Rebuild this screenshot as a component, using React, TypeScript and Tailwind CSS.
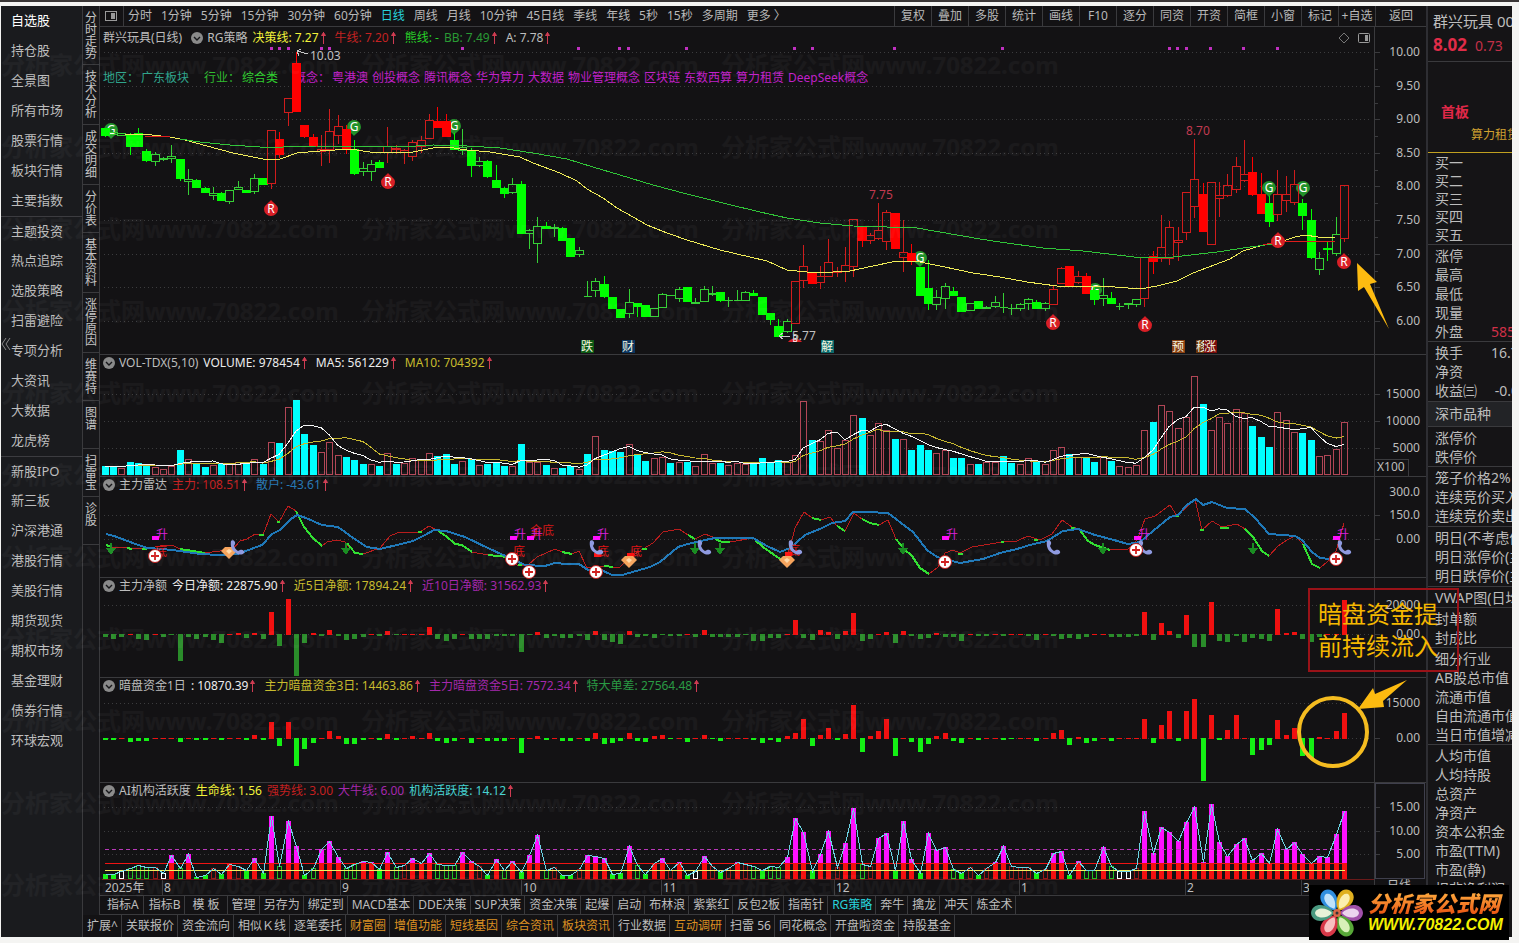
import type { ReactNode } from 'react';
import { clsx } from 'clsx';

const STEP = 8.317;
const cx = (i: number) => Math.floor(105.2 + STEP * i);

const SIDE_MENU = [
  ['自选股', '持仓股', '全景图', '所有市场', '股票行情', '板块行情', '主要指数'],
  ['主题投资', '热点追踪', '选股策略', '扫雷避险', '专项分析', '大资讯', '大数据', '龙虎榜'],
  ['新股IPO', '新三板', '沪深港通', '港股行情', '美股行情', '期货现货', '期权市场', '基金理财', '债券行情', '环球宏观'],
];

const SIDE_TABS = ['分时走势', '技术分析', '成交明细', '分价表', '基本资料', '涨停原因', '维赛特', '图谱', '扫雷宝', '诊股'];

const PERIODS = ['分时', '1分钟', '5分钟', '15分钟', '30分钟', '60分钟', '日线', '周线', '月线', '10分钟', '45日线', '季线', '年线', '5秒', '15秒', '多周期', '更多 〉'];
const TOOLS = ['复权', '叠加', '多股', '统计', '画线', 'F10', '逐分', '同资', '开资', '简框', '小窗', '标记', '+自选'];

const TEMPLATES = ['指标A', '指标B', '模 板', '管理', '另存为', '绑定到', 'MACD基本', 'DDE决策', 'SUP决策', '资金决策', '起爆', '启动', '布林浪', '紫紫红', '反包2板', '指南针', 'RG策略', '奔牛', '擒龙', '冲天', '炼金术'];
const EXTENSIONS = ['扩展^', '关联报价', '资金流向', '相似Ｋ线', '逐笔委托', '财富圈', '增值功能', '短线基因', '综合资讯', '板块资讯', '行业数据', '互动调研', '扫雷 56', '同花概念', '开盘啦资金', '持股基金'];
const HOT = ['财富圈', '增值功能', '短线基因', '综合资讯', '板块资讯', '互动调研'];

// kind + high,top,bottom,low   (r/R rising hollow/solid, g/G falling hollow/solid)
const CANDLES = `
G128,128,136,137 g132,132,135,135 g133,133,136,136 G133,134,147,155 G128,133,147,147 G149,151,161,162 g152,154,162,166 g157,158,160,161
g145,156,159,163 G159,159,179,181 g169,179,182,195 G179,180,188,188 G187,188,193,193 g187,193,196,200 G192,193,201,201 g190,190,202,204
g181,187,190,190 G190,190,193,193 g174,178,192,194 G178,178,185,185 r130,130,184,189 R132,139,155,158 r98,98,113,126 R52,63,112,112
R125,125,137,138 R134,137,147,147 r135,149,152,166 r109,131,150,163 r115,126,136,144 R125,129,149,154 G140,149,174,175 g162,168,172,176
g160,164,172,181 G160,162,168,168 r127,146,153,163 r145,148,150,154 r149,150,153,164 r140,142,157,161 r136,140,147,153 r114,120,139,139
R107,121,128,128 R114,121,137,137 G133,140,150,150 g129,147,151,155 G148,151,166,177 g157,161,166,167 G160,161,177,178 G165,180,188,188
G187,188,194,198 g178,184,193,194 G181,184,234,234 g229,230,234,249 g217,226,244,263 G222,226,229,229 g224,227,229,237 G227,228,241,241
G238,238,257,257 g247,250,255,257 g281,296,297,297 g278,281,291,297 G276,284,297,298 G297,297,309,309 G309,309,318,318 g289,302,314,318
G303,303,307,317 G305,305,317,317 g308,308,317,317 g293,294,308,308 g295,295,296,296 g287,289,299,302 G287,287,302,302 g298,302,304,304
g286,289,302,302 g286,293,295,296 G292,292,301,302 g297,300,301,307 g290,300,301,301 g291,292,301,301 G290,293,296,296 G297,297,315,315
G313,313,320,325 G319,326,337,337 g319,321,332,333 r281,281,324,324 r245,266,281,288 R272,273,284,284 r266,276,283,289 r239,262,277,277
r267,271,273,277 r247,265,272,282 r219,219,267,277 R226,226,241,247 r233,235,241,244 r203,230,239,240 r210,212,242,250 R213,213,249,249
r220,252,258,272 R244,253,262,265 G267,267,296,296 G260,288,304,310 g290,297,305,310 g283,286,299,309 G287,291,296,296 G297,297,312,312
g303,303,311,311 G301,301,309,309 g306,307,309,309 g296,302,307,308 g293,307,308,313 g304,308,309,315 g303,304,309,311 g298,299,304,310
G300,302,309,309 g302,303,309,311 r286,289,305,305 r267,268,284,284 R266,266,286,286 r271,276,283,284 R273,276,294,294 G287,290,300,305
g278,295,299,306 G292,298,304,304 g303,306,307,310 g303,303,305,309 g299,299,305,307 r257,257,299,307 R251,256,262,274 r215,247,259,262
r221,227,259,265 r227,240,243,261 r192,192,233,240 r139,179,207,218 R183,194,232,232 r182,182,245,245 r182,195,199,217 r174,185,196,197
r157,166,190,193 r140,174,181,182 R157,172,195,196 R173,194,214,214 G196,203,222,227 r170,194,215,221 r176,194,201,212 r170,184,203,205
G199,203,216,230 G209,220,258,259 g252,258,270,275 G241,248,250,261 g217,234,254,256 r185,185,239,242`
  .trim()
  .split(/\s+/)
  .map((s) => ({ kind: s[0], v: s.slice(1).split(',').map(Number) }));

// c = falling day (solid), r = rising day (hollow)
const VOLUME = `
c9 c9 r7 c13 c12 c10 r8 r6 r9 c25 r16 c11 c8 r10 c11 r12 r13 c11 r16 c11 r33 c32 r68 c75 c41 c30 r23 r33 r20 c18
c15 c11 r11 c9 r22 c11 r12 r17 r16 r22 c19 c21 c11 r14 c16 r10 c11 c13 c9 r9 c31 r13 r13 c10 r7 c7 c9 r6 c21 r39
c25 c24 c23 r31 c20 c14 r17 r18 c12 r13 c13 r9 r21 r12 c12 r10 r12 r11 c11 c17 c12 c15 r13 r20 r74 c35 r34 r45 r27 r35
r60 c57 r40 r52 r45 c36 r36 c25 c30 c25 r22 r25 c17 c17 r11 c11 r13 r13 c19 c12 r11 r17 c13 r11 r25 r28 c21 r18 c18 c13
r18 c14 r9 r8 r10 r45 c53 r70 r64 r47 r58 r99 c71 r45 r58 r52 r66 r62 c49 c38 c28 r63 r55 r43 c42 c35 r19 r20 r26 r53`
  .trim()
  .split(/\s+/)
  .map((s) => ({ down: s[0] === 'c', h: Number(s.slice(1)) }));

const NET_FLOW = [
  -3, -5, -3, 1, -5, -6, 1, -3, -1, -27, -3, -5, -3, -6, -9, 1, 2, -4, 2, -5, 23, -12, 36, -42, -9, 2, -2, 5, -2, -6,
  -5, -3, 1, -2, 4, -1, 1, 1, 1, 8, -5, -7, -5, 1, -5, -5, -5, -2, -2, -2, -18, -1, 3, -4, -2, -4, -4, -2, -6, 4,
  -6, -8, -10, 4, -3, -2, -4, -1, -2, -2, 1, -3, 5, -3, -3, -3, -3, -1, -7, -7, -4, -4, 1, 15, -4, -6, 5, 3, -5, 4,
  22, -7, -5, 1, 3, -9, 4, -2, -5, -4, 2, -3, -3, -7, 1, -2, -2, 1, -2, 1, 1, -2, -6, 1, -2, -5, -4, -5, -3, 1,
  1, -3, -3, -3, -2, 23, -6, 12, 4, -4, 20, -13, -13, 33, -7, -8, -2, -8, -4, -5, -7, 26, 2, 3, -5, -8, -3, 1, 1, 35,
];

const DARK_POOL = [
  -2, -2, 1, -4, -3, -3, 1, 1, 1, -4, 1, -2, -2, 1, -2, 1, 1, -2, 4, -2, 17, -8, 17, -28, -11, -5, 1, 8, 3, -6,
  -6, -2, 1, -2, 5, -2, 1, 3, 1, 6, -3, -5, -3, 1, -5, 1, -3, -3, -3, 1, -15, 1, 3, -2, 1, -3, -3, 1, -3, 6,
  -6, -5, -3, 6, -3, -4, 3, 4, -1, 1, -4, 1, 4, -1, -3, 1, 1, 1, -2, -5, -2, -4, 3, 6, 20, -8, 4, 11, -2, 5,
  34, -14, 3, 8, 20, -18, 1, -4, -14, -6, 3, 6, -3, -5, 1, -2, 1, 1, -2, -1, 1, 1, -3, 1, 6, 9, -7, 2, -5, -3,
  1, -3, 1, 1, 1, 20, -5, 14, 28, -3, 28, 40, -43, 24, -2, 9, 24, 1, -17, -12, -7, 19, 4, 11, -18, -21, 2, 1, 8, 26,
];

// F solid green, g hollow green, w hollow white, d hollow dark red, s strong
const ACTIVITY = `
F5 F5 w8 g11 g14 g12 d12 w6 s24 g11 s25 F2 F4 d11 F5 s15 d13 F9 s21 F6 s63 g13 s58 s33 F4 g11 s30 s38 s22 g11
g15 s18 s17 F10 s27 g12 d14 s21 s16 s26 g15 g14 g14 s27 s18 d13 F4 s20 g9 s18 F7 s24 s44 g9 d12 F4 F4 d10 s24 s23
s21 F5 F6 s33 g14 F5 s16 s21 d9 s17 F4 w8 s23 d13 F7 d11 s17 d15 g13 F9 g13 g12 s22 s61 s47 F8 s25 s48 d12 s36
s71 g15 d13 s41 s46 F9 s58 s20 F6 s46 s29 s32 g10 F6 d12 F4 d11 s17 s33 d13 d12 d12 F6 d10 s26 s28 F4 s18 g9 g9
s32 g13 w8 w8 d11 s68 s26 s52 s47 s38 s57 s72 s17 s75 s37 s23 s35 s41 s19 s26 s16 s50 s30 s37 s25 s16 s23 s22 s45 s68`
  .trim()
  .split(/\s+/)
  .map((s) => ({ kind: s[0], h: Number(s.slice(1)) }));

const CONCEPTS: [string, number][] = [
  ['粤港澳', 332], ['创投概念', 372], ['腾讯概念', 424], ['华为算力', 476], ['大数据', 528],
  ['物业管理概念', 568], ['区块链', 644], ['东数西算', 684], ['算力租赁', 736], ['DeepSeek概念', 788],
];

const movingAverage = (n: number) =>
  VOLUME.map((_, i) => {
    const part = VOLUME.slice(Math.max(0, i - n + 1), i + 1);
    return `${cx(i)},${475 - part.reduce((sum, v) => sum + v.h, 0) / part.length}`;
  }).join(' ');

const FAST_LINE = '125,134 143,134 170,137 185,140 207,146 233,153 263,159 280,159 297,153 320,151 350,149 370,152 413,152 433,148 447,147 467,150 490,152 520,157 533,163 560,173 577,181 587,189 603,198 617,208 633,217 647,225 667,233 687,240 720,250 767,261 787,270 807,272 833,272 850,271 873,266 897,261 920,262 940,266 973,273 1000,277 1027,282 1057,286 1103,286 1140,289 1157,286 1177,281 1193,273 1230,259 1243,251 1263,245 1283,241 1295,237 1305,235 1318,237 1335,237';
const SLOW_LINE = '180,139 200,142 230,145 260,147 283,147 317,146 367,146 400,147 433,145 467,146 500,148 533,153 567,159 593,167 620,175 653,185 687,194 727,204 760,212 787,218 820,223 853,226 887,227 917,228 980,239 1000,242 1043,248 1083,251 1117,255 1143,258 1173,257 1217,252 1250,247 1273,244';

const RETAIL_LINE = '106,534 114,536 130,542 147,548 163,549 180,551 200,554 220,555 237,554 243,552 262,545 272,534 280,530 291,519 297,515 306,518 322,525 338,527 356,540 367,547 380,549 397,545 413,541 425,535 434,530 446,531 465,537 490,549 512,559 525,565 545,566 555,563 567,564 579,564 588,570 597,568 612,575 622,575 650,567 660,562 678,547 688,544 705,540 715,538 753,538 767,546 780,552 790,548 805,535 822,528 832,523 845,521 853,512 868,512 888,513 913,532 927,550 937,557 960,563 983,559 1000,553 1017,549 1030,545 1047,541 1063,531 1078,529 1095,535 1110,539 1128,544 1140,542 1153,531 1170,517 1178,515 1187,505 1196,499 1203,505 1212,502 1227,508 1245,509 1255,518 1269,534 1295,536 1302,540 1312,552 1320,558 1330,559';
const MAIN_LINE = '106,545 112,547 130,548 145,549 160,546 172,545 180,549 205,553 220,551 232,550 240,541 247,539 255,534 263,535 271,514 279,522 288,506 296,511 304,527 313,538 322,546 327,542 337,540 345,542 350,548 355,553 363,554 380,548 390,536 397,533 420,532 429,526 438,531 446,536 455,544 462,545 472,552 488,555 508,557 517,565 528,565 537,557 555,549 562,552 572,554 579,551 587,568 603,566 613,567 620,567 630,557 643,549 653,543 663,532 679,529 688,535 695,539 705,534 715,538 722,542 730,542 753,538 763,547 780,559 785,563 790,547 795,528 804,512 812,518 821,520 830,517 837,526 845,531 854,513 862,519 870,523 879,525 888,520 896,539 904,549 912,556 920,568 929,574 938,567 945,553 953,550 960,553 972,547 1002,542 1017,541 1028,536 1040,540 1052,534 1062,520 1072,527 1079,529 1088,541 1095,545 1110,550 1128,549 1137,540 1145,519 1155,516 1170,505 1177,516 1195,499 1202,530 1212,521 1222,527 1237,524 1245,529 1253,537 1262,551 1269,556 1278,546 1287,540 1295,536 1303,544 1312,564 1320,568 1335,555 1340,537 1344,523';
const MAIN_FALLING = [
  '106,545 112,547', '127,548 132,549', '142,549 147,549', '180,549 205,553', '259,535 264,535', '277,522 280,522', '296,511 304,527 313,538 322,546',
  '347,543 355,553 363,554', '418,532 422,532', '438,531 446,536 455,544 462,545 472,552', '488,555 508,557', '518,565 522,565', '562,552 572,554', '604,566 613,567', '642,549 647,549',
  '688,535 695,539', '715,539 722,542 730,542', '755,540 763,547 780,559 785,563', '812,518 821,520', '837,526 845,531',
  '862,519 870,523 879,525', '896,539 904,549 912,556 920,568 929,574', '958,554 963,554', '1001,542 1004,542', '1034,540 1038,540', '1071,528 1079,529 1088,541 1095,545 1110,550',
  '1174,516 1179,516', '1200,530 1204,530', '1220,528 1229,528', '1245,529 1253,537 1262,551 1269,556', '1303,544 1312,564 1320,568',
];

interface Reading {
  text: string;
  color: string;
  flat?: boolean;
}

function RiseMark() {
  return (
    <svg className="ml-px block h-[14px] w-[7px] shrink-0" viewBox="0 0 7 14" fill="none" stroke="#d03c52">
      <path d="M3.5 1v12M1.5 4.5l2-3 2 3z" fill="#d03c52" />
    </svg>
  );
}

function PanelHeader({ title, readings, first, children }: { title: string; readings: Reading[]; first?: boolean; children?: ReactNode }) {
  return (
    <header className={clsx('flex h-[18px] items-stretch', !first && 'border-t border-[#3a3a3d]')}>
      <div className={clsx('flex min-w-0 flex-1 items-center border-r border-[#3a3a3d] pl-[3px] whitespace-nowrap', first ? 'pt-[3px]' : 'pb-px')}>
        {first && <h1 className="mr-[9px]">群兴玩具(日线)</h1>}
        <button aria-label="指标菜单" className="mr-1 shrink-0">
          <svg className="block h-3 w-3" viewBox="0 0 12 12">
            <circle cx="6" cy="6" r="6" fill="#8a8a8a" />
            <path d="M3 5l3 3 3-3" fill="none" stroke="#17171a" strokeWidth="1.4" />
          </svg>
        </button>
        <h2 className="mr-[5px]">{title}</h2>
        {readings.map((r) => (
          <span key={r.text} className={clsx('flex items-center', r.flat ? 'mr-[5px]' : 'mr-2', r.color)}>
            {r.text}
            {!r.flat && <RiseMark />}
          </span>
        ))}
        {children}
      </div>
      <div className="w-[51px] shrink-0" />
    </header>
  );
}

function Plot({ top, height, children, label }: { top: number; height: number; children: ReactNode; label: string }) {
  return (
    <svg className="block h-auto w-full overflow-visible" viewBox={`100 ${top} 1326 ${height}`} role="img" aria-label={label} shapeRendering="crispEdges">
      <path d={`M1374.5 ${top}v${height}`} stroke="#3a3a3d" />
      {children}
    </svg>
  );
}

function Axis({ marks }: { marks: [string, number][] }) {
  return (
    <>
      {marks.map(([text, y]) => (
        <g key={text}>
          <path d={`M104 ${y + 0.5}H1372`} stroke="#3c3c3e" strokeDasharray="1 3" />
          <path d={`M1375 ${y + 0.5}h5`} stroke="#3a3a3d" />
          <text x="1420" y={y + 4} textAnchor="end" fill="#bdbdbd">{text}</text>
        </g>
      ))}
    </>
  );
}

function Candle({ i, kind, v }: { i: number; kind: string; v: number[] }) {
  const [high, top, bottom, low] = v;
  const x = cx(i);
  const solid = kind === 'R' || kind === 'G';
  const rising = kind.toLowerCase() === 'r';
  const stroke = rising ? (solid ? '#ff0000' : '#d01c1c') : solid ? '#00ff00' : '#35d035';
  return (
    <g stroke={stroke}>
      <path d={`M${x + 0.5} ${high}V${top}M${x + 0.5} ${bottom}V${low}`} />
      {solid ? (
        <rect x={x - 4} y={top} width="9" height={Math.max(2, bottom - top)} fill={stroke} stroke="none" />
      ) : (
        <path d={`M${x - 3.5} ${top + 0.5}h8v${bottom - top - 1}h-8z`} fill="none" />
      )}
    </g>
  );
}

function FlowBars({ data, zero, down }: { data: number[]; zero: number; down: string }) {
  return (
    <>
      {data.map((h, i) => (
        <rect key={i} x={cx(i) - 2} y={h > 0 ? zero - h + 1 : zero} width="5" height={Math.abs(h)} fill={h > 0 ? '#f01010' : down} />
      ))}
    </>
  );
}

function Signal({ x, y, buy, half }: { x: number; y: number; buy?: boolean; half?: boolean }) {
  return (
    <g transform={`translate(${x} ${y})`} shapeRendering="auto">
      <path
        d={half ? 'M-7 4A8 7 0 0 1 7 4Z' : buy ? 'M0-9C2-6 7-4 7 0A7 7 0 0 1-7 0C-7-4-2-6 0-9Z' : 'M0 9C2 6 7 4 7 0A7 7 0 0 0-7 0C-7 4-2 6 0 9Z'}
        fill={buy ? '#d81f26' : '#22922a'}
      />
      <text y="4" textAnchor="middle" fill="#fff" fontSize={half ? 8 : 12}>{half ? 'B' : buy ? 'R' : 'G'}</text>
    </g>
  );
}

function Phone({ x, y }: { x: number; y: number }) {
  return (
    <path
      transform={`translate(${x} ${y})`}
      shapeRendering="auto"
      d="M-6-7c-1 5 1 10 5 12 3 2 6 2 8 0 1-2-2-4-4-3l-2 1c-2-1-3-3-4-5l1-2c1-2-2-5-4-3z"
      fill="#8f9ae0"
    />
  );
}

function Cross({ x, y }: { x: number; y: number }) {
  return (
    <g transform={`translate(${x} ${y})`} shapeRendering="auto">
      <circle r="6.5" fill="#fff" stroke="#c01818" />
      <path d="M-4 0h8M0-4v8" stroke="#d02020" strokeWidth="1.8" />
    </g>
  );
}

function Gem({ x, y }: { x: number; y: number }) {
  return (
    <g transform={`translate(${x} ${y})`} shapeRendering="auto">
      <path d="M-4-5h8l4 4-8 8-8-8z" fill="#f7a45c" />
      <path d="M-3-1l3-2 3 2-3 3z" fill="#ffd9a8" />
    </g>
  );
}

function Rising({ x, y }: { x: number; y: number }) {
  return (
    <g>
      <text x={x + 1} y={y + 4} fill="#d820d8">升</text>
      <rect x={x - 3} y={y + 1} width="7" height="4" fill="#ff10ff" />
    </g>
  );
}

function PricePanel() {
  const dots = [271, 279, 288, 321, 329, 462, 578, 619, 628, 686, 794, 812, 894, 1002, 1169, 1177, 1186, 1210, 1243, 1277];
  const tags: [number, string, string][] = [
    [581, '跌', '#0c5a14'], [622, '财', '#0a3560'], [821, '解', '#0b6a6c'], [1172, '预', '#8a4010'], [1196, '移', '#6a3408'], [1204, '涨', '#7a0c0c'],
  ];
  return (
    <section>
      <PanelHeader
        first
        title="RG策略"
        readings={[
          { text: '决策线: 7.27', color: 'text-[#f2f23a]' },
          { text: '牛线: 7.20', color: 'text-[#c42222]' },
          { text: '熊线: -', color: 'text-[#28d028]', flat: true },
          { text: 'BB: 7.49', color: 'text-[#2a9a34]' },
          { text: 'A: 7.78', color: 'text-[#bdbdbd]' },
        ]}
      >
        <div className="ml-auto flex items-center gap-2 pr-1">
          <svg className="h-3 w-3" viewBox="0 0 12 12" fill="none" stroke="#777"><path d="M6 1l5 5-5 5-5-5z" /></svg>
          <svg className="h-3 w-3" viewBox="0 0 12 12" fill="none" stroke="#9a9a9a"><rect x=".5" y="1.5" width="11" height="9" rx="1" /><path d="M7 3h3v6H7z" fill="#9a9a9a" stroke="none" /></svg>
        </div>
      </PanelHeader>
      <Plot top={45} height={309} label="日K线">
        <Axis marks={[['10.00', 52], ['9.50', 86], ['9.00', 119], ['8.50', 153], ['8.00', 186], ['7.50', 220], ['7.00', 254], ['6.50', 287], ['6.00', 321]]} />
        {[69, 103, 136, 170, 203, 237, 271, 304].map((y) => (
          <path key={y} d={`M1375 ${y + 0.5}h3`} stroke="#3a3a3d" />
        ))}
        {dots.map((x) => (
          <rect key={x} x={x - 1} y="47" width="3" height="3" fill="#c030c0" />
        ))}
        <text y="82" fill="#c020c8">
          <tspan x="103" fill="#2fa58c">地区：</tspan>
          <tspan x="141" fill="#2fa58c">广东板块</tspan>
          <tspan x="204" fill="#30bc30">行业：</tspan>
          <tspan x="242" fill="#30d030">综合类</tspan>
          <tspan x="294">概念：</tspan>
          {CONCEPTS.map(([name, x]) => (
            <tspan key={name} x={x}>{name}</tspan>
          ))}
        </text>
        {[[111, 130], [354, 127], [454, 126], [920, 258], [1095, 290], [1269, 188], [1303, 188]].map(([x, y]) => (
          <Signal key={x} x={x} y={y} />
        ))}
        {CANDLES.map((c, i) => (
          <Candle key={i} i={i} {...c} />
        ))}
        <polyline points={FAST_LINE} fill="none" stroke="#f0ec58" />
        <polyline points={SLOW_LINE} fill="none" stroke="#30c438" />
        <polyline points="145,136 158,136 170,137" fill="none" stroke="#e01c1c" />
        <polyline points="1263,245 1280,241 1335,241" fill="none" stroke="#e01c1c" />
        {[[271, 209], [388, 182], [1053, 323], [1145, 325], [1278, 241], [1344, 262]].map(([x, y]) => (
          <Signal key={x} x={x} y={y} buy />
        ))}
        <Signal x={795} y={338} buy half />
        <text x="310" y="60" fill="#c0c0c0">10.03</text>
        <path d="M308 54l-11-3m4-2l-4 2 2 5" fill="none" stroke="#c8c8c8" />
        <text x="869" y="199" fill="#c23a50">7.75</text>
        <text x="1186" y="135" fill="#c23a50">8.70</text>
        <text x="792" y="340" fill="#c0c0c0">5.77</text>
        <path d="M790 336h-11m4-3l-4 3 4 3" fill="none" stroke="#c8c8c8" />
        {tags.map(([x, ch, bg]) => (
          <g key={ch}>
            <rect x={x} y="340" width="13" height="13" fill={bg} />
            <text x={x} y="351" fill="#f4f4e0">{ch}</text>
          </g>
        ))}
      </Plot>
    </section>
  );
}

function VolumePanel() {
  return (
    <section>
      <PanelHeader
        title="VOL-TDX(5,10)"
        readings={[
          { text: 'VOLUME: 978454', color: 'text-[#ececec]' },
          { text: 'MA5: 561229', color: 'text-[#ececec]' },
          { text: 'MA10: 704392', color: 'text-[#c8bc2e]' },
        ]}
      />
      <Plot top={372} height={104} label="成交量">
        <Axis marks={[['15000', 394], ['10000', 421], ['5000', 448]]} />
        {VOLUME.map((v, i) =>
          v.down ? (
            <rect key={i} x={cx(i) - 3} y={475 - v.h} width="7" height={v.h} fill="#00ffff" />
          ) : (
            <rect key={i} x={cx(i) - 2.5} y={475.5 - v.h} width="6" height={v.h - 1} fill="none" stroke="#b24656" />
          ),
        )}
        <polyline points={movingAverage(10)} fill="none" stroke="#c8b830" />
        <polyline points={movingAverage(5)} fill="none" stroke="#f4f4f4" />
        <path d="M1375 459.5h33.5V476" fill="none" stroke="#3a3a3d" />
        <text x="1377" y="471" fill="#bdbdbd">X100</text>
      </Plot>
    </section>
  );
}

function RadarPanel() {
  return (
    <section>
      <PanelHeader
        title="主力雷达"
        readings={[
          { text: '主力: 108.51', color: 'text-[#c42020]' },
          { text: '散户: -43.61', color: 'text-[#2678b4]' },
        ]}
      />
      <Plot top={494} height={83} label="主力雷达">
        <Axis marks={[['150.0', 515], ['0.00', 539]]} />
        <text x="1420" y="496" textAnchor="end" fill="#bdbdbd">300.0</text>
        <polyline points={MAIN_LINE} fill="none" stroke="#b81c1c" />
        {MAIN_FALLING.map((points) => (
          <polyline key={points} points={points} fill="none" stroke="#32e032" strokeWidth="2" />
        ))}
        <polyline points={RETAIL_LINE} fill="none" stroke="#1f78b8" strokeWidth="2" />
        {[111, 346, 695, 720, 903, 1103, 1253].map((x) => (
          <path key={x} d={`M${x - 1} 543h2v5h4l-5 7-5-7h4z`} fill="#1a8c22" />
        ))}
        {[[155, 556], [513, 556], [597, 556], [630, 556], [788, 555]].map(([x, y]) => (
          <g key={x}>
            <text x={x} y={y} fill="#e01414">底</text>
            <rect x={x - 3} y={y - 3} width="7" height="4" fill="#ff1010" />
          </g>
        ))}
        <text x="530" y="535" fill="#d01818">金底</text>
        {[155, 513, 530, 596, 945, 1137, 1336].map((x) => (
          <Rising key={x} x={x} y={535} />
        ))}
        {[[229, 552], [629, 561], [787, 561]].map(([x, y]) => (
          <Gem key={x} x={x} y={y} />
        ))}
        {[237, 596, 704, 795, 1053, 1145, 1344].map((x) => (
          <Phone key={x} x={x} y={548} />
        ))}
        {[[155, 556], [512, 559], [529, 572], [596, 572], [945, 562], [1136, 550], [1336, 559]].map(([x, y]) => (
          <Cross key={x} x={x} y={y} />
        ))}
      </Plot>
    </section>
  );
}

function NetPanel() {
  return (
    <section>
      <PanelHeader
        title="主力净额"
        readings={[
          { text: '今日净额: 22875.90', color: 'text-[#ececec]' },
          { text: '近5日净额: 17894.24', color: 'text-[#c8bc2e]' },
          { text: '近10日净额: 31562.93', color: 'text-[#a428ac]' },
        ]}
      />
      <Plot top={595} height={82} label="主力净额">
        <Axis marks={[['20000', 605], ['0.00', 634]]} />
        <FlowBars data={NET_FLOW} zero={634} down="#2a8c2a" />
      </Plot>
    </section>
  );
}

function DarkPanel() {
  return (
    <section>
      <PanelHeader
        title="暗盘资金1日"
        readings={[
          { text: ': 10870.39', color: 'text-[#ececec]' },
          { text: '主力暗盘资金3日: 14463.86', color: 'text-[#c8bc2e]' },
          { text: '主力暗盘资金5日: 7572.34', color: 'text-[#a428ac]' },
          { text: '特大单差: 27564.48', color: 'text-[#2a9a44]' },
        ]}
      />
      <Plot top={695} height={87} label="暗盘资金">
        <Axis marks={[['15000', 703], ['0.00', 738]]} />
        <FlowBars data={DARK_POOL} zero={738} down="#14f014" />
      </Plot>
    </section>
  );
}

function ActivityPanel() {
  const outline: Record<string, string> = { g: '#22c022', w: '#ffffff', d: '#9a1616' };
  return (
    <section>
      <PanelHeader
        title="AI机构活跃度"
        readings={[
          { text: '生命线: 1.56', color: 'text-[#f2f23a]', flat: true },
          { text: '强势线: 3.00', color: 'text-[#c42020]', flat: true },
          { text: '大牛线: 6.00', color: 'text-[#a428ac]', flat: true },
          { text: '机构活跃度: 14.12', color: 'text-[#46d2d2]' },
        ]}
      />
      <Plot top={800} height={79} label="机构活跃度">
        <Axis marks={[['15.00', 807], ['10.00', 831], ['5.00', 854]]} />
        <path d="M1375.5 783.5h49v95h-49z" fill="none" stroke="#3f3f4c" />
        {ACTIVITY.map(({ kind, h }, i) => {
          const x = cx(i);
          if (kind === 's')
            return (
              <g key={i}>
                <rect x={x - 2} y={879 - h} width="5" height={h} fill="#ff10ff" />
                <rect x={x - 2} y={Math.max(863, 879 - h)} width="5" height={Math.min(16, h)} fill="#f41010" />
              </g>
            );
          if (kind === 'F') return <rect key={i} x={x - 2} y={879 - h} width="5" height={h} fill="#14f014" />;
          return <rect key={i} x={x - 1.5} y={879.5 - h} width="4" height={h - 1} fill="#141214" stroke={outline[kind]} />;
        })}
        {Array.from({ length: 177 }, (_, i) => (
          <rect key={i} x={105 + i * 7} y="849" width="4" height="1" fill="#b838b8" />
        ))}
        <rect x="105" y="870" width="1240" height="1" fill="#f0f060" />
        <rect x="105" y="863" width="1240" height="1" fill="#f01414" />
        <polyline points={ACTIVITY.map(({ h }, i) => `${cx(i) + 0.5},${879.5 - h}`).join(' ')} fill="none" stroke="#6cd4e4" />
      </Plot>
    </section>
  );
}

function Timeline() {
  const months: [string, number][] = [['8', 163], ['9', 341], ['10', 522], ['11', 662], ['12', 835], ['1', 1020], ['2', 1186], ['3', 1302]];
  return (
    <Plot top={879} height={16} label="时间轴">
      <rect x="102" y="879" width="1272" height="1" fill="#6a1a1a" />
      <text x="105" y="892" fill="#bdbdbd">2025年</text>
      {months.map(([m, x]) => (
        <g key={m}>
          <path d={`M${x - 0.5} 880v15`} stroke="#3a3a3d" />
          <text x={x + 1} y="892" fill="#bdbdbd">{m}</text>
        </g>
      ))}
      <text x="1387" y="890" fill="#bdbdbd">日线</text>
    </Plot>
  );
}

interface Row {
  label: string;
  value?: string;
  tone?: string;
}

const QUOTE_GROUPS: { rows: Row[]; className: string }[] = [
  {
    className: 'pt-px',
    rows: [{ label: '涨停' }, { label: '最高' }, { label: '最低' }, { label: '现量' }, { label: '外盘', value: '5852', tone: 'text-[#d03048]' }],
  },
  { className: 'pt-px pb-px', rows: [{ label: '换手', value: '16.7' }, { label: '净资' }, { label: '收益㈢', value: '\u00a0-0.0' }] },
];

const EXTRA_GROUPS: { rows: string[]; className: string }[] = [
  { className: 'pt-px', rows: ['涨停价', '跌停价'] },
  { className: 'pt-px pb-px', rows: ['笼子价格2%', '连续竞价买入', '连续竞价卖出'] },
  { className: 'pt-px pb-px', rows: ['明日(不考虑停牌)', '明日涨停价(主)', '明日跌停价(主)'] },
  { className: 'pt-px', rows: ['VWAP图(日均)'] },
  { className: 'pt-px', rows: ['封单额', '封成比'] },
  { className: 'pt-px', rows: ['细分行业', 'AB股总市值', '流通市值', '自由流通市值', '当日市值增减'] },
];

function QuotePanel() {
  return (
    <aside className="h-[931px] w-[86px] shrink-0 overflow-hidden border-l-2 border-[#2e2e33] bg-[#151416] text-[14px] leading-[19px] whitespace-nowrap text-[#bdbdbd]">
      <div className="h-14 border-b border-[#3a3a3d] pl-[5px] pt-1">
        <h2 className="text-[15px] leading-[22px]">群兴玩具 002575</h2>
        <p className="flex items-center gap-2 text-[#e02c48]">
          <strong className="text-[17px] leading-[26px]">8.02</strong>
          <span className="text-[#c43048]">0.73</span>
        </p>
      </div>
      <div className="flex h-[91px] flex-col justify-end gap-1 border-b border-[#c0a020] pb-2">
        <strong className="pl-[13px] text-[#e02848]">首板</strong>
        <span className="pl-[43px] text-[12px] text-[#d0a030]">算力租赁</span>
      </div>
      <ul className="border-b border-[#3a3a3d] pl-[7px] pt-px leading-[18px]">
        {['买一', '买二', '买三', '买四', '买五'].map((t) => (
          <li key={t}>{t}</li>
        ))}
      </ul>
      {QUOTE_GROUPS.map((g) => (
        <dl key={g.rows[0].label} className={clsx('border-b border-[#3a3a3d] pl-[7px]', g.className)}>
          {g.rows.map((r) => (
            <div key={r.label} className="flex gap-[14px]">
              <dt className="w-[42px] shrink-0">{r.label}</dt>
              <dd className={clsx('shrink-0', r.tone)}>{r.value}</dd>
            </div>
          ))}
        </dl>
      ))}
      <h3 className="border-b border-[#3a3a3d] bg-[#222326] pl-[7px] leading-[24px]">深市品种</h3>
      {EXTRA_GROUPS.map((g) => (
        <ul key={g.rows[0]} className={clsx('border-b border-[#3a3a3d] pl-[7px]', g.className)}>
          {g.rows.map((t) => (
            <li key={t}>{t}</li>
          ))}
        </ul>
      ))}
      <ul className="pl-[7px] pt-px">
        {['人均市值', '人均持股', '总资产', '净资产', '资本公积金', '市盈(TTM)', '市盈(静)', '扣非净利润'].map((t) => (
          <li key={t}>{t}</li>
        ))}
      </ul>
    </aside>
  );
}

function Sidebar() {
  return (
    <nav className="relative w-[81px] shrink-0 bg-[#1a1b1e] text-[13px]">
      {SIDE_MENU.map((group, gi) => (
        <ul key={gi} className={clsx(gi > 0 && 'border-t border-[#3c3c40]')}>
          {group.map((t, i) => (
            <li key={t} className={clsx(gi > 0 && i === 0 ? 'h-[29px]' : 'h-[30px]')}>
              <a href="#" className={clsx('block pl-[10px] leading-[29px]', t === '自选股' ? 'text-white' : 'text-[#bdbdbd]')}>{t}</a>
            </li>
          ))}
        </ul>
      ))}
      <button aria-label="收起" className="absolute top-[332px] left-0">
        <svg className="block h-3 w-[10px]" viewBox="0 0 10 12" fill="none" stroke="#888"><path d="M5 0L1 6l4 6M9 0L5 6l4 6" /></svg>
      </button>
    </nav>
  );
}

function SideTabs() {
  return (
    <div className="w-[18px] shrink-0 border-x border-[#3a3a3d] bg-[#17171a]">
      {SIDE_TABS.map((t, i) => (
        <button
          key={t}
          className={clsx('flex w-full flex-col items-center border-b border-[#3a3a3d] pt-[6px] leading-3 text-[#c4c4c4]', i === 0 ? 'h-[59px]' : t.length === 4 ? 'h-[60px]' : 'h-12')}
        >
          {[...t].map((ch) => (
            <span key={ch}>{ch}</span>
          ))}
        </button>
      ))}
    </div>
  );
}

function Toolbar() {
  return (
    <div className="flex h-[21px] items-stretch border-b border-[#3a3a3d] text-[#b8b8b8] whitespace-nowrap">
      <button aria-label="侧栏" className="flex w-6 shrink-0 items-center border-r border-[#3a3a3d] pl-[5px]">
        <svg className="h-3 w-3" viewBox="0 0 12 12" fill="none" stroke="#9a9a9a"><rect x=".5" y="1.5" width="11" height="9" /><path d="M6 3h4v6H6z" fill="#9a9a9a" stroke="none" /></svg>
      </button>
      <div className="ml-1 flex w-[658px] shrink-0 items-center justify-between">
        {PERIODS.map((t) => (
          <button key={t} className={clsx(t === '日线' && 'text-[#28d2dc]')}>{t}</button>
        ))}
      </div>
      <div className="ml-auto flex border-l border-[#3a3a3d]">
        {TOOLS.map((t) => (
          <button key={t} className="w-[37px] border-r border-[#3a3a3d]">{t}</button>
        ))}
        <button className="w-[50px]">返回</button>
      </div>
    </div>
  );
}

function Watermark() {
  return (
    <div aria-hidden className="pointer-events-none absolute inset-0 overflow-hidden pt-[18px] text-[24px] leading-[82px] font-bold text-white/[.035]">
      {Array.from({ length: 11 }, (_, row) => (
        <div key={row} className="flex h-[82px]">
          {[0, 1, 2].map((col) => (
            <span key={col} className="w-[360px] whitespace-nowrap">分析家公式网www.70822.com</span>
          ))}
        </div>
      ))}
    </div>
  );
}

function Logo() {
  const petals: [number, string, string][] = [[-30, '#2f8fe0', '#bfe2fa'], [30, '#e0b020', '#fbeeb0'], [90, '#a050a8', '#ecd4ee'], [150, '#58a838', '#d8f0b8'], [210, '#d83848', '#f8c0c0'], [270, '#4a9a80', '#e8f2d8']];
  return (
    <div className="absolute right-[3px] bottom-[-3px] flex h-[55px] w-[200px] items-center bg-black pl-[1px]">
      <svg className="h-[54px] w-[54px] shrink-0" viewBox="-27 -27 54 54">
        {petals.map(([angle, rim, core]) => (
          <g key={angle} transform={`rotate(${angle})`}>
            <path d="M0-3C-10-9-11-25 0-26 11-25 10-9 0-3Z" fill={rim} />
            <path d="M0-5C-6-10-6-21 0-22 6-21 6-10 0-5Z" fill={core} />
          </g>
        ))}
        <circle r="4" fill="#d86848" />
        <circle r="1.5" fill="#333" />
      </svg>
      <div className="ml-1 whitespace-nowrap">
        <p className="bg-linear-to-b from-[#ffb040] to-[#e85010] bg-clip-text pr-1 text-[22px] leading-[24px] font-black text-transparent italic">分析家公式网</p>
        <p className="font-['Liberation_Sans',sans-serif] text-[16px] leading-[20px] font-bold text-[#f4f000] italic">WWW.70822.COM</p>
      </div>
    </div>
  );
}

function Annotations() {
  return (
    <>
      <p className="absolute top-[582px] right-[53px] w-[151px] border-2 border-[#9a1218] pt-2 pb-2 pl-2 text-[24px] leading-8 text-[#f5b800]">
        暗盘资金提
        <br />
        前持续流入
      </p>
      <svg className="pointer-events-none absolute top-[250px] right-[92px] h-[520px] w-[130px]" viewBox="1290 256 130 520" fill="#fdbb10">
        <path d="M1357 263l20 19-7 2 19 45-25-42-6 4z" />
        <path d="M1358 709l15-21 2 6 32-14-24 21 1 6z" />
        <circle cx="1333" cy="732" r="34" fill="none" stroke="#f5bc20" strokeWidth="4" />
      </svg>
    </>
  );
}

export default function App() {
  return (
    <div className="bg-[#f4f4f2] pr-[7px] pb-[6px] pl-px font-['Noto_Sans','Noto_Sans_CJK_SC',sans-serif] text-[12px] leading-4 text-[#bdbdbd]">
      <div className="mr-[-7px] ml-[-1px] h-0.5 bg-[#3a3636]" />
      <div className="h-1" />
      <div className="relative flex bg-[#131214]">
        <Sidebar />
        <div className="flex min-w-0 flex-1 flex-col">
          <div className="flex">
            <SideTabs />
            <main className="min-w-0 flex-1">
              <Toolbar />
              <PricePanel />
              <VolumePanel />
              <RadarPanel />
              <NetPanel />
              <DarkPanel />
              <ActivityPanel />
              <Timeline />
              <div className="flex h-5 overflow-hidden border-y border-[#3a3a3d] pl-[2px] whitespace-nowrap">
                {TEMPLATES.map((t, i) => (
                  <button key={t} className={clsx('border-r border-[#3a3a3d]', i < 2 ? 'pr-1 pl-[5px]' : i === 2 ? 'px-[7px]' : 'pr-[3px] pl-1', t === 'RG策略' && 'text-[#28d2dc]')}>{t}</button>
                ))}
              </div>
            </main>
          </div>
          <div className="flex h-[22px] overflow-hidden border-l border-[#3a3a3d] whitespace-nowrap">
            {EXTENSIONS.map((t) => (
              <button key={t} className={clsx('border-r border-[#3a3a3d] pr-[3px] pl-1', HOT.includes(t) && 'text-[#dc9022]')}>{t}</button>
            ))}
          </div>
        </div>
        <QuotePanel />
        <Watermark />
        <Annotations />
        <Logo />
      </div>
    </div>
  );
}
